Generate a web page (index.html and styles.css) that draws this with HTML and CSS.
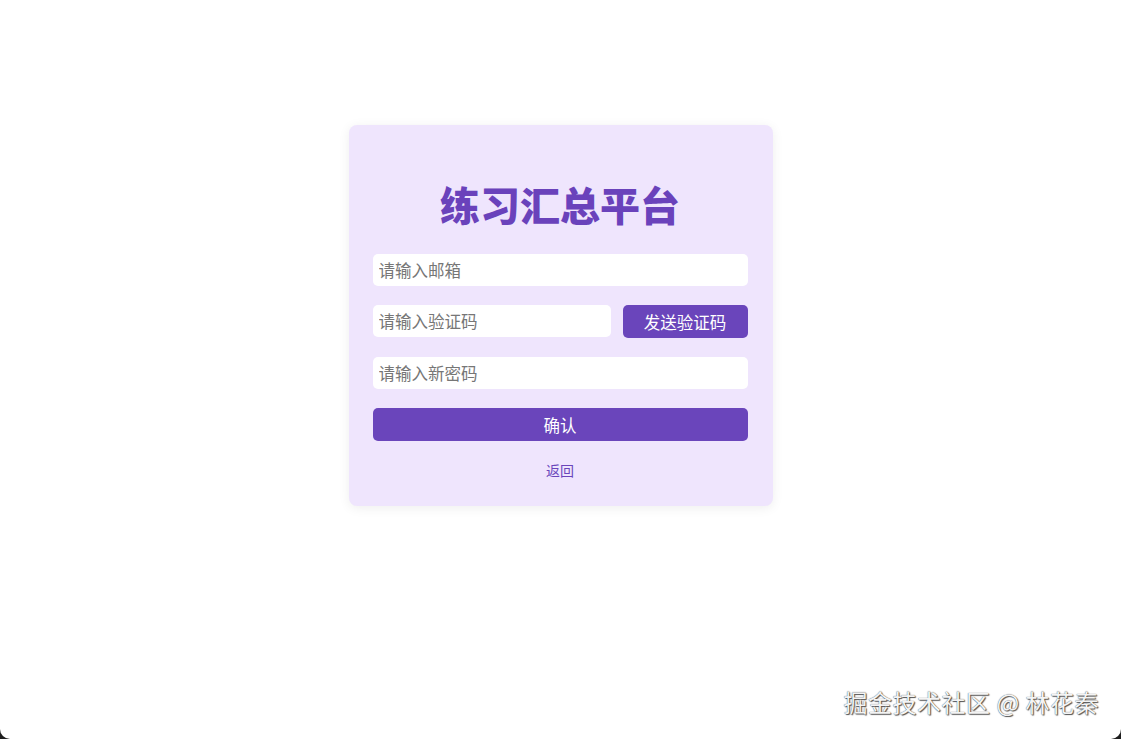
FILE: index.html
```html
<!DOCTYPE html>
<html lang="zh-CN">
<head>
    <meta charset="UTF-8">
    <meta name="viewport" content="width=device-width, initial-scale=1.0">
    <title>找回密码 - 练习汇总平台</title>
    <link rel="stylesheet" href="styles.css">
</head>
<body>
    <div class="page">
        <div class="reset-box">
            <h1>练习汇总平台</h1>
            <form class="reset-form" onsubmit="return false">
                <input type="email" class="field" placeholder="请输入邮箱">
                <div class="code-row">
                    <input type="text" class="field" placeholder="请输入验证码">
                    <button type="button" class="btn btn-send">发送验证码</button>
                </div>
                <input type="password" class="field" placeholder="请输入新密码">
                <button type="submit" class="btn btn-confirm">确认</button>
            </form>
            <a class="back" href="#">返回</a>
        </div>
        <div class="watermark">掘金技术社区 @ 林花秦</div>
    </div>
</body>
</html>
```

FILE: styles.css
```css
html {
    background: #1e1e1e;
}
body {
    margin: 0;
    font-family: "Noto Sans CJK SC", "Noto Sans", sans-serif;
}
.page {
    position: relative;
    height: 739px;
    background: #fff;
    border-radius: 0 0 10px 10px;
    display: flex;
    justify-content: center;
    align-items: flex-start;
    padding-top: 125px;
    box-sizing: border-box;
}
.reset-box {
    width: 424px;
    box-sizing: border-box;
    padding: 24px 25px 26px 24px;
    background: #efe5fd;
    border-radius: 8px;
    box-shadow: 0 2px 12px rgba(0, 0, 0, 0.07);
    display: flex;
    flex-direction: column;
    align-items: center;
}
.reset-box h1 {
    margin: 26px 0 21px;
    font-size: 40px;
    line-height: 58px;
    font-weight: 800;
    color: #6a42bb;
}
.reset-form {
    width: 100%;
    display: flex;
    flex-direction: column;
    gap: 19px;
}
.code-row {
    display: flex;
    gap: 12px;
}
.code-row .field {
    flex: 1;
    min-width: 0;
}
.field {
    height: 32px;
    box-sizing: border-box;
    padding: 0 6px;
    border: none;
    border-radius: 5px;
    background: #fff;
    font-family: inherit;
    font-size: 16.5px;
    color: #333;
    outline: none;
}
.field::placeholder {
    color: #767676;
}
.btn {
    height: 33px;
    border: none;
    border-radius: 5px;
    background: #6a45bb;
    color: #fff;
    font-family: inherit;
    font-size: 16.5px;
    cursor: pointer;
}
.btn:hover {
    background: #5b37a8;
}
.btn-send {
    width: 125px;
}
.back {
    margin-top: 19px;
    font-size: 14px;
    line-height: 20px;
    color: #6a45bb;
    text-decoration: none;
}
.watermark {
    position: absolute;
    right: 22px;
    bottom: 20px;
    font-size: 24px;
    color: #f4f4f4;
    text-shadow: 0 0 1px #333, 1px 1px 1px #555;
    letter-spacing: 0.5px;
}
```
